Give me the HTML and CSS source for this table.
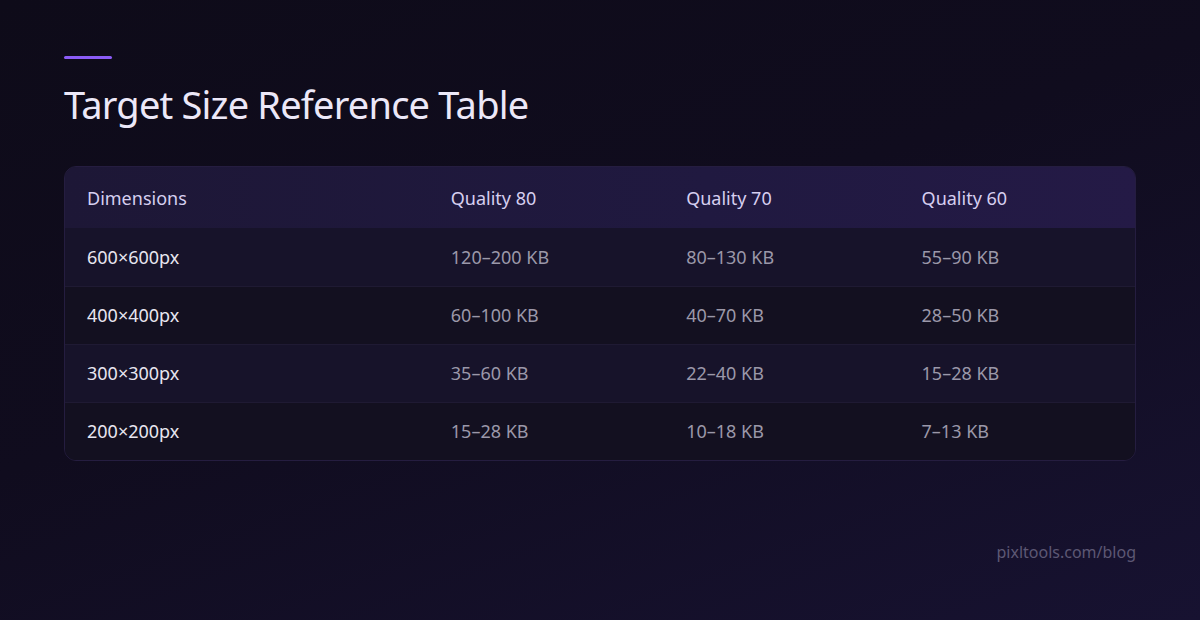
FILE: index.html
```html
<!DOCTYPE html>
<html>
<head>
<meta charset="utf-8">
<link rel="stylesheet" href="styles.css">
</head>
<body>
<main class="page">
  <div class="accent"></div>
  <h1 class="title">Target Size Reference Table</h1>
  <div class="table-wrap">
    <table class="ref-table">
      <colgroup>
        <col class="c-dim"><col class="c-q"><col class="c-q"><col class="c-q">
      </colgroup>
      <thead>
        <tr><th>Dimensions</th><th>Quality 80</th><th>Quality 70</th><th>Quality 60</th></tr>
      </thead>
      <tbody>
        <tr><td>600×600px</td><td>120–200 KB</td><td>80–130 KB</td><td>55–90 KB</td></tr>
        <tr><td>400×400px</td><td>60–100 KB</td><td>40–70 KB</td><td>28–50 KB</td></tr>
        <tr><td>300×300px</td><td>35–60 KB</td><td>22–40 KB</td><td>15–28 KB</td></tr>
        <tr><td>200×200px</td><td>15–28 KB</td><td>10–18 KB</td><td>7–13 KB</td></tr>
      </tbody>
    </table>
  </div>
  <footer class="footer">pixltools.com/blog</footer>
</main>
</body>
</html>
```

FILE: styles.css
```css
* { box-sizing: border-box; }
html, body {
  margin: 0;
  padding: 0;
  width: 1200px;
  height: 620px;
  overflow: hidden;
}
body {
  font-family: "Noto Sans", "Open Sans", sans-serif;
  background: linear-gradient(160deg, #0e0b19 0%, #100c1e 45%, #171231 100%);
}
.page {
  display: flex;
  flex-direction: column;
  padding: 56px 64px 0 64px;
  height: 620px;
}
.accent {
  width: 48px;
  height: 3px;
  border-radius: 2px;
  background: #8b5cf6;
}
.title {
  margin: 19px 0 0 0;
  font-weight: 400;
  font-size: 38px;
  line-height: 52px;
  color: #ece8f8;
  letter-spacing: -0.8px;
}
.table-wrap {
  margin-top: 36px;
  border: 1px solid #251d40;
  border-radius: 12px;
  overflow: hidden;
  background: #14111f;
}
.ref-table {
  width: 100%;
  border-collapse: collapse;
  table-layout: fixed;
  font-size: 18px;
}
.c-dim { width: 34%; }
.c-q { width: 22%; }
.ref-table thead tr {
  background: linear-gradient(90deg, #1d1736 0%, #201940 60%, #241a46 100%);
}
.ref-table th {
  text-align: left;
  font-weight: 400;
  color: #d6cff0;
  height: 61px;
  padding: 0 0 0 22px;
}
.ref-table td {
  height: 58px;
  padding: 0 0 0 22px;
  color: #9b98a9;
  border-top: 1px solid #1f1a33;
}
.ref-table td:first-child { color: #e8e6f0; }
.ref-table tbody tr:nth-child(odd) td { background: #17132a; }
.ref-table tbody tr:nth-child(even) td { background: #131020; }
.ref-table tbody tr:first-child td { border-top: none; }
.footer {
  margin-top: auto;
  margin-bottom: 57px;
  text-align: right;
  font-size: 16px;
  color: #5d5874;
}
```
